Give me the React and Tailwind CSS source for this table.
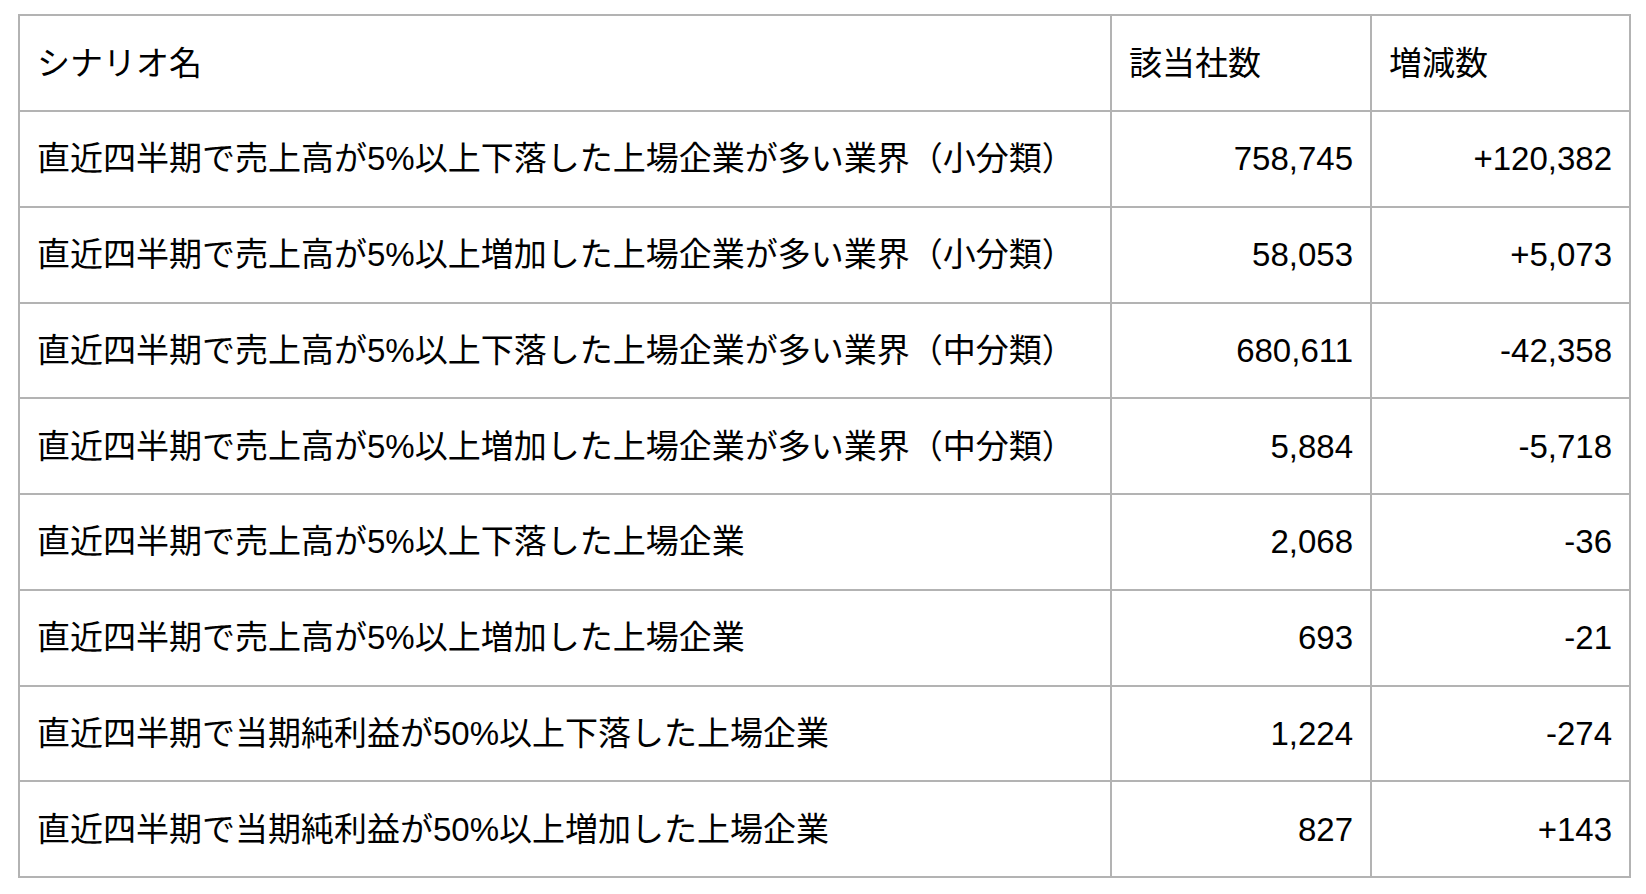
const rows = [
  { name: "直近四半期で売上高が5%以上下落した上場企業が多い業界（小分類）", count: "758,745", diff: "+120,382" },
  { name: "直近四半期で売上高が5%以上増加した上場企業が多い業界（小分類）", count: "58,053", diff: "+5,073" },
  { name: "直近四半期で売上高が5%以上下落した上場企業が多い業界（中分類）", count: "680,611", diff: "-42,358" },
  { name: "直近四半期で売上高が5%以上増加した上場企業が多い業界（中分類）", count: "5,884", diff: "-5,718" },
  { name: "直近四半期で売上高が5%以上下落した上場企業", count: "2,068", diff: "-36" },
  { name: "直近四半期で売上高が5%以上増加した上場企業", count: "693", diff: "-21" },
  { name: "直近四半期で当期純利益が50%以上下落した上場企業", count: "1,224", diff: "-274" },
  { name: "直近四半期で当期純利益が50%以上増加した上場企業", count: "827", diff: "+143" },
];

const cell = "border-2 border-[#b3b3b3] px-[17px] align-middle";

export default function App() {
  return (
    <div
      className="min-h-screen bg-white pl-[18px] pt-[14px] text-[33px] leading-none text-black"
      style={{ fontFamily: '"Liberation Sans", "Noto Sans CJK JP", sans-serif' }}
    >
      <table className="w-[1611px] table-fixed border-collapse">
        <colgroup>
          <col className="w-[1092px]" />
          <col className="w-[260px]" />
          <col className="w-[259px]" />
        </colgroup>
        <thead>
          <tr className="h-[96px]">
            <th className={`${cell} text-left font-normal`}>シナリオ名</th>
            <th className={`${cell} text-left font-normal`}>該当社数</th>
            <th className={`${cell} text-left font-normal`}>増減数</th>
          </tr>
        </thead>
        <tbody>
          {rows.map((row) => (
            <tr key={row.name} className="h-[95.75px]">
              <td className={`${cell} text-left`}>{row.name}</td>
              <td className={`${cell} text-right`}>{row.count}</td>
              <td className={`${cell} text-right`}>{row.diff}</td>
            </tr>
          ))}
        </tbody>
      </table>
    </div>
  );
}
